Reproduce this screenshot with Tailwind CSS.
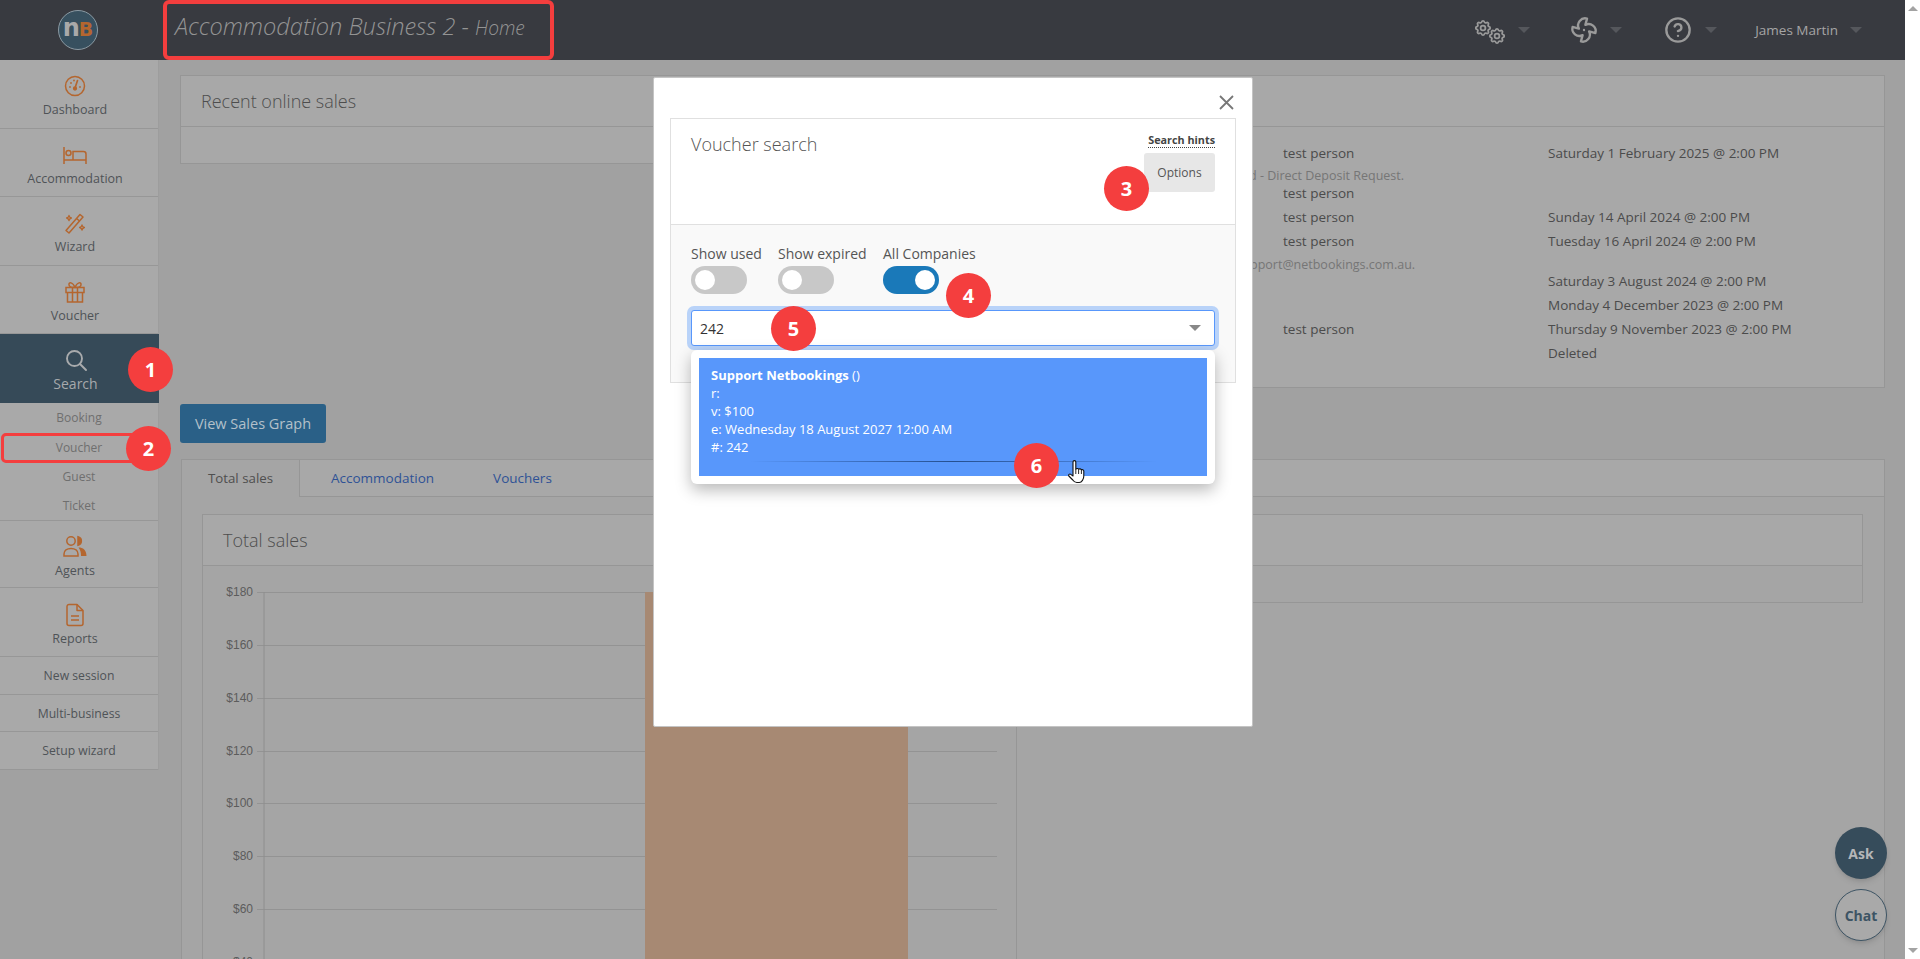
<!doctype html>
<html>
<head>
  <meta charset="UTF-8">
  <meta name="viewport" content="width=device-width, initial-scale=1.0">
  <script src="https://cdn.jsdelivr.net/npm/@tailwindcss/browser@4"></script>
</head>
<body class="relative w-[1920px] h-[959px] overflow-hidden flex bg-white font-['Open_Sans',sans-serif] text-[#505050]">

  <!-- page, already dimmed by the modal backdrop -->
  <div class="w-[1905px] h-[959px] flex flex-col bg-[#a1a1a1] shrink-0">
    <header class="h-[60px] bg-[#383a40] flex items-center shrink-0">
      <div class="w-[175px] shrink-0 pl-[58px]">
        <div class="w-[40px] h-[40px] rounded-full bg-[#37505f] border border-[#8b9aa3] flex items-baseline justify-center pt-[5px] font-['DejaVu_Sans',sans-serif] font-bold leading-none">
          <span class="text-[#a9a9a9] text-[24px] -mr-[1px]">n</span><span class="text-[#b4662f] text-[19px]">B</span>
        </div>
      </div>
      <div class="-mt-[7px] italic font-light text-[#949494] text-[23.6px] whitespace-nowrap">Accommodation Business 2 - <span class="text-[19.2px]">Home</span></div>
      <div class="ml-auto flex items-center text-[#9a9a9a]">
        <svg class="w-[30px] h-[30px]" viewBox="0 0 30 30" fill="none" stroke="currentColor">
          <g transform="translate(-1.6 3.4) scale(.8)"><path d="M10.325 4.317c.426 -1.756 2.924 -1.756 3.35 0a1.724 1.724 0 0 0 2.573 1.066c1.543 -.94 3.31 .826 2.37 2.37a1.724 1.724 0 0 0 1.065 2.572c1.756 .426 1.756 2.924 0 3.35a1.724 1.724 0 0 0 -1.066 2.573c.94 1.543 -.826 3.31 -2.37 2.37a1.724 1.724 0 0 0 -2.572 1.065c-.426 1.756 -2.924 1.756 -3.35 0a1.724 1.724 0 0 0 -2.573 -1.066c-1.543 .94 -3.31 -.826 -2.37 -2.37a1.724 1.724 0 0 0 -1.065 -2.572c-1.756 -.426 -1.756 -2.924 0 -3.35a1.724 1.724 0 0 0 1.066 -2.573c-.94 -1.543 .826 -3.31 2.37 -2.37c1 .608 2.296 .07 2.572 -1.065z" stroke-width="2.200"/><circle cx="12" cy="12" r="3" stroke-width="2.200"/></g>
          <g transform="translate(12.4 11.4) scale(.8)"><path d="M10.325 4.317c.426 -1.756 2.924 -1.756 3.35 0a1.724 1.724 0 0 0 2.573 1.066c1.543 -.94 3.31 .826 2.37 2.37a1.724 1.724 0 0 0 1.065 2.572c1.756 .426 1.756 2.924 0 3.35a1.724 1.724 0 0 0 -1.066 2.573c.94 1.543 -.826 3.31 -2.37 2.37a1.724 1.724 0 0 0 -2.572 1.065c-.426 1.756 -2.924 1.756 -3.35 0a1.724 1.724 0 0 0 -2.573 -1.066c-1.543 .94 -3.31 -.826 -2.37 -2.37a1.724 1.724 0 0 0 -1.065 -2.572c-1.756 -.426 -1.756 -2.924 0 -3.35a1.724 1.724 0 0 0 1.066 -2.573c-.94 -1.543 .826 -3.31 2.37 -2.37c1 .608 2.296 .07 2.572 -1.065z" stroke-width="2.200"/><circle cx="12" cy="12" r="3" stroke-width="2.200"/></g>
        </svg>
        <div class="ml-[13px] w-0 h-0 border-x-[6px] border-x-transparent border-t-[6px] border-t-[#55575c]"></div>
        <svg class="ml-[40px] w-[28px] h-[28px]" viewBox="0 0 24 24" fill="none" stroke="currentColor" stroke-width="2" stroke-linejoin="round" stroke-linecap="round"><path d="M10.827 16.379a6.082 6.082 0 0 1-8.618-7.002l5.412 1.45a6.082 6.082 0 0 1 7.002-8.618l-1.45 5.412a6.082 6.082 0 0 1 8.618 7.002l-5.412-1.45a6.082 6.082 0 0 1-7.002 8.618l1.45-5.412Z"/><path d="M12 12v.01"/></svg>
        <div class="ml-[12px] w-0 h-0 border-x-[6px] border-x-transparent border-t-[6px] border-t-[#55575c]"></div>
        <svg class="ml-[42px] w-[28px] h-[28px]" viewBox="0 0 24 24" fill="none" stroke="currentColor" stroke-width="2" stroke-linecap="round" stroke-linejoin="round"><circle cx="12" cy="12" r="10"/><path d="M9.09 9a3 3 0 0 1 5.83 1c0 2-3 3-3 3"/><path d="M12 17h.01"/></svg>
        <div class="ml-[13px] w-0 h-0 border-x-[6px] border-x-transparent border-t-[6px] border-t-[#55575c]"></div>
        <span class="ml-[38px] text-[13.5px] text-[#a5a5a5] whitespace-nowrap">James Martin</span>
        <div class="ml-[12px] mr-[43px] w-0 h-0 border-x-[6px] border-x-transparent border-t-[6px] border-t-[#55575c]"></div>
      </div>
    </header>

    <div class="flex flex-1 min-h-0">
      <!-- sidebar -->
      <nav class="w-[159px] shrink-0 self-start bg-[#a9a9a9] border-r border-[#9d9d9d] text-[12.5px] text-[#4f5357]">
        <a class="h-[69px] flex flex-col items-center pt-[14px] pr-[8px] border-b border-[#979797]">
          <svg class="w-[24px] h-[24px] text-[#b4662f]" viewBox="0 0 24 24" fill="none" stroke="currentColor" stroke-width="1.5" stroke-linecap="round"><circle cx="12" cy="12" r="9.5"/><path d="M12.5 12.5l2-6" stroke-width="1.7"/><circle cx="12" cy="14.5" r="1.4" fill="currentColor"/><path d="M7 13v.01M8 9v.01M11 6.5v.01M17 13v.01" stroke-width="1.8"/></svg>
          <span class="mt-[2px] leading-[20px]">Dashboard</span>
        </a>
        <a class="h-[68px] flex flex-col items-center pt-[14px] pr-[8px] border-b border-[#979797]">
          <svg class="w-[24px] h-[24px] text-[#b4662f]" viewBox="0 0 24 24" fill="none" stroke="currentColor" stroke-width="1.5"><path d="M1 4v17M1 17h22M23 21V11a2.5 2.5 0 0 0-2.5-2.5H10V17"/><circle cx="5.5" cy="10" r="2.5"/></svg>
          <span class="mt-[2px] leading-[20px]">Accommodation</span>
        </a>
        <a class="h-[69px] flex flex-col items-center pt-[14px] pr-[8px] border-b border-[#979797]">
          <svg class="w-[24px] h-[24px] text-[#b4662f]" viewBox="0 0 24 24" fill="none" stroke="currentColor" stroke-width="1.5" stroke-linejoin="round"><path d="M3 19.5L17 3.5l3 2.5L6 22z"/><path d="M13.5 7.5l3 2.5"/><path d="M6 4.5c.3 1.6 1 2.2 2.4 2.5-1.4.3-2.1 1-2.4 2.5-.3-1.5-1-2.2-2.4-2.5 1.4-.3 2.1-.9 2.4-2.5zM19 14c.3 1.6 1 2.2 2.4 2.5-1.4.3-2.1 1-2.4 2.5-.3-1.5-1-2.2-2.4-2.5 1.4-.3 2.1-.9 2.4-2.5z" stroke-width="1.3"/></svg>
          <span class="mt-[2px] leading-[20px]">Wizard</span>
        </a>
        <a class="h-[68px] flex flex-col items-center pt-[14px] pr-[8px] border-b border-[#979797]">
          <svg class="w-[24px] h-[24px] text-[#b4662f]" viewBox="0 0 24 24" fill="none" stroke="currentColor" stroke-width="1.5"><rect x="3" y="7.5" width="18" height="5"/><path d="M4.5 12.5V22h15v-9.500M9.500 7.500V22M14.500 7.500V22"/><path d="M12 7.500C10 2 5.500 1.500 6 5c.2 1.500 2 2.500 6 2.500zM12 7.500C14 2 18.500 1.500 18 5c-.2 1.500-2 2.500-6 2.500z"/></svg>
          <span class="mt-[2px] leading-[20px]">Voucher</span>
        </a>
        <a class="h-[69px] flex flex-col items-center pt-[14px] pr-[8px] bg-[#364a58] text-[#a6a9ac] text-[14px] -mr-px">
          <svg class="w-[24px] h-[24px] text-[#a9abad]" viewBox="0 0 24 24" fill="none" stroke="currentColor" stroke-width="1.9" stroke-linecap="round"><circle cx="10.500" cy="10.500" r="7.500"/><path d="M16 16l6 6"/></svg>
          <span class="mt-[2px] leading-[20px]">Search</span>
        </a>
        <div class="h-[118px] flex flex-col text-[12px] text-[#6f6f6f] border-b border-[#979797]">
          <a class="flex-1 flex items-center justify-center">Booking</a>
          <a class="flex-1 flex items-center justify-center pt-[1px]">Voucher</a>
          <a class="flex-1 flex items-center justify-center">Guest</a>
          <a class="flex-1 flex items-center justify-center">Ticket</a>
        </div>
        <a class="h-[67px] flex flex-col items-center pt-[14px] pr-[8px] border-b border-[#979797]">
          <svg class="w-[24px] h-[24px] text-[#b4662f]" viewBox="0 0 24 24" fill="none" stroke="currentColor" stroke-width="1.5"><circle cx="8" cy="6" r="4.200"/><path d="M1 21v-2c0-3.500 3-5.500 7-5.500s7 2 7 5.500v2z"/><path d="M15 1.800a4.300 4.300 0 0 1 0 8.400z" fill="currentColor"/><path d="M15.500 12.500c4.500 0 8 2.500 8 8.500h-5.500c0-3.500-.5-6-2.500-8.500z" fill="currentColor" stroke="none"/></svg>
          <span class="mt-[2px] leading-[20px]">Agents</span>
        </a>
        <a class="h-[69px] flex flex-col items-center pt-[15px] pr-[8px] border-b border-[#979797]">
          <svg class="w-[24px] h-[24px] text-[#b4662f]" viewBox="0 0 24 24" fill="none" stroke="currentColor" stroke-width="1.5" stroke-linejoin="round"><path d="M14 1.500H6a2 2 0 0 0-2 2v17a2 2 0 0 0 2 2h12a2 2 0 0 0 2-2V7.500z"/><path d="M14 1.500v6h6M8 13h8M8 17h8"/></svg>
          <span class="mt-[2px] leading-[20px]">Reports</span>
        </a>
        <a class="h-[38px] pt-[2px] flex items-center justify-center border-b border-[#979797] text-[12.2px]">New session</a>
        <a class="h-[37px] pt-[3px] flex items-center justify-center border-b border-[#979797] text-[12.2px]">Multi-business</a>
        <a class="h-[38px] pt-[2px] flex items-center justify-center border-b border-[#979797] text-[12.2px]">Setup wizard</a>
      </nav>

      <!-- main column -->
      <main class="flex-1 min-w-0 pl-[21px] pr-[20px] pt-[15px] overflow-hidden">
        <section class="w-[1705px]">
          <div class="h-[52px] bg-[#a8a8a8] border border-[#969696] flex items-center pl-[20px] text-[18px] font-light text-[#4d4d4d]">Recent online sales</div>
          <div class="flex h-[261px]">
            <div class="w-[500px] h-[37px] bg-[#a8a8a8] border-x border-b border-[#969696]"></div>
            <div class="flex-1 bg-[#a8a8a8] border-r border-b border-[#969696] pt-[14px] pl-[603px] text-[13.5px] text-[#4b4b4b]">
              <div class="grid grid-cols-[265px_1fr] auto-rows-[24px] items-center">
                <span>test person</span><span>Saturday 1 February 2025 @ 2:00 PM</span>
              </div>
              <div class="h-[16px] -ml-[34px] pt-[3px] leading-[16px] text-[12.5px] text-[#767676]">d - Direct Deposit Request.</div>
              <div class="grid grid-cols-[265px_1fr] auto-rows-[24px] items-center">
                <span>test person</span><span></span>
                <span>test person</span><span>Sunday 14 April 2024 @ 2:00 PM</span>
                <span>test person</span><span>Tuesday 16 April 2024 @ 2:00 PM</span>
              </div>
              <div class="h-[16px] -ml-[33px] pt-[4px] leading-[16px] text-[12.5px] text-[#767676]">pport@netbookings.com.au.</div>
              <div class="grid grid-cols-[265px_1fr] auto-rows-[24px] items-center">
                <span></span><span>Saturday 3 August 2024 @ 2:00 PM</span>
                <span></span><span>Monday 4 December 2023 @ 2:00 PM</span>
                <span>test person</span><span>Thursday 9 November 2023 @ 2:00 PM</span>
                <span></span><span>Deleted</span>
              </div>
            </div>
          </div>
        </section>

        <button class="mt-[16px] h-[39px] w-[146px] rounded-[3px] bg-[#2a6087] text-[14.5px] text-[#b3c0ca] flex items-center justify-center">View Sales Graph</button>

        <section class="mt-[16px] ml-[1px] w-[1704px]">
          <div class="h-[38px] flex items-stretch bg-[#a8a8a8] border-t border-r border-[#969696] text-[13.5px]">
            <a class="w-[119px] border-l border-r border-[#969696] bg-[#a5a5a5] flex items-center justify-center text-[#4f4f4f] text-[13.3px]">Total sales</a>
            <div class="flex-1 flex items-center border-b border-[#969696] text-[#2f5296]">
              <a class="ml-[31px]">Accommodation</a>
              <a class="ml-[59px]">Vouchers</a>
            </div>
          </div>
          <div class="bg-[#a5a5a5] border-x border-[#969696] px-[20px] pt-[17px] h-[500px]">
            <div class="h-[52px] w-[1661px] bg-[#a8a8a8] border border-[#969696] flex items-center pl-[20px] text-[18px] font-light text-[#4d4d4d]">Total sales</div>
            <div class="flex w-[1661px]">
              <div class="w-[815px] h-[440px] border-x border-[#969696]">
                <svg width="814" height="394" class="block -mt-px">
                  <g stroke="#939393" stroke-width="1">
                    <path d="M54 27.500H794M54 80.500H794M54 133.500H794M54 186.500H794M54 238.500H794M54 291.500H794M54 344.500H794M54 397.500H794"/>
                    <path d="M61 27V394" stroke="#8e8e8e"/>
                  </g>
                  <rect x="442" y="27" width="263" height="367" fill="#a78973"/>
                  <g fill="#5c5c5c" font-family="Liberation Sans, sans-serif" font-size="12" text-anchor="end">
                    <text x="50" y="31">$180</text>
                    <text x="50" y="84">$160</text>
                    <text x="50" y="137">$140</text>
                    <text x="50" y="190">$120</text>
                    <text x="50" y="242">$100</text>
                    <text x="50" y="295">$80</text>
                    <text x="50" y="348">$60</text>
                    <text x="50" y="401">$40</text>
                  </g>
                </svg>
              </div>
              <div class="flex-1 h-[37px] border-r border-b border-[#969696]"></div>
            </div>
          </div>
        </section>
      </main>
    </div>
  </div>

  <!-- scrollbar -->
  <div class="w-[15px] h-[959px] bg-white flex flex-col items-center justify-between py-[6px]">
    <div class="w-0 h-0 border-x-[5px] border-x-transparent border-b-[5px] border-b-[#a3a3a3]"></div>
    <div class="w-0 h-0 border-x-[5px] border-x-transparent border-t-[5px] border-t-[#a3a3a3]"></div>
  </div>

  <!-- floating help buttons -->
  <div class="absolute left-[1835px] top-[827px] flex flex-col gap-[10px] font-bold text-[14px]">
    <div class="w-[52px] h-[52px] rounded-full bg-[#364c5b] text-[#b4b6b8] flex items-center justify-center shadow-md">Ask</div>
    <div class="w-[52px] h-[52px] rounded-full bg-[#a9a9a9] border border-[#3d5464] text-[#3d5464] flex items-center justify-center shadow-md">Chat</div>
  </div>

  <!-- voucher search modal -->
  <div class="absolute left-[653px] top-[77px] w-[600px] h-[650px] bg-white border border-[#c4c4c4] rounded-[2px] pt-[40px] pl-[16px] pr-[16px]">
    <svg class="absolute left-[565px] top-[17px] w-[15px] h-[15px]" viewBox="0 0 15 15" stroke="#777" stroke-width="1.8"><path d="M1 1l13 13M14 1L1 14"/></svg>
    <div class="h-[265px] border border-[#e0e0e0] bg-[#f9f9f9]">
      <div class="h-[106px] bg-white border-b border-[#e0e0e0] flex justify-between pl-[20px] pr-[20px]">
        <div class="pt-[12px] text-[18px] font-light text-[#555] leading-[27px]">Voucher search</div>
        <div class="pt-[14px] flex flex-col items-end">
          <span class="text-[10.8px] leading-[14px] font-bold text-[#444] border-b border-dotted border-[#444]">Search hints</span>
          <button class="mt-[5px] w-[71px] h-[39px] rounded-[3px] bg-[#e7e7e7] text-[12px] text-[#555]">Options</button>
        </div>
      </div>
      <div class="pt-[19px] pl-[20px] pr-[20px]">
        <div class="flex text-[14px] text-[#555] leading-[20px]">
          <div class="w-[87px]">
            <div class="whitespace-nowrap">Show used</div>
            <div class="mt-[2px] w-[56px] h-[28px] rounded-full bg-[#c8c8c8] flex items-center pl-[4px]"><div class="w-[20px] h-[20px] rounded-full bg-white"></div></div>
          </div>
          <div class="w-[105px]">
            <div class="whitespace-nowrap">Show expired</div>
            <div class="mt-[2px] w-[56px] h-[28px] rounded-full bg-[#c8c8c8] flex items-center pl-[4px]"><div class="w-[20px] h-[20px] rounded-full bg-white"></div></div>
          </div>
          <div>
            <div class="whitespace-nowrap">All Companies</div>
            <div class="mt-[2px] w-[56px] h-[28px] rounded-full bg-[#1a79b9] flex items-center justify-end pr-[4px]"><div class="w-[20px] h-[20px] rounded-full bg-white"></div></div>
          </div>
        </div>
        <div class="relative mt-[16px] h-[36px] w-[524px] bg-white border border-[#5897fb] rounded-[3px] ring-[4px] ring-[#b9d3f9] flex items-center pl-[8px] text-[14px] text-[#333]">
          242
          <div class="absolute right-[13px] top-[14px] w-0 h-0 border-x-[6px] border-x-transparent border-t-[6px] border-t-[#888]"></div>
        </div>
      </div>
    </div>
    <!-- dropdown results -->
    <div class="absolute left-[37px] top-[272px] w-[524px] h-[134px] bg-white rounded-[6px] shadow-[0_6px_16px_rgba(0,0,0,0.28)] p-[8px]">
      <div class="relative h-[118px] bg-[#5897fb] text-white text-[13px] leading-[18px] pl-[12px] pt-[8px]">
        <div><b class="font-bold">Support Netbookings</b> ()</div>
        <div>r:</div>
        <div>v: $100</div>
        <div>e: Wednesday 18 August 2027 12:00 AM</div>
        <div>#: 242</div>
        <div class="absolute left-[51px] top-[103px] w-[407px] h-px bg-gradient-to-r from-[#5897fb] via-[#254f8f] to-[#5897fb]"></div>
      </div>
    </div>
  </div>

  <!-- hand cursor -->
  <svg class="absolute left-[1067px] top-[459px] w-[21px] h-[26px]" viewBox="0 0 21 26" fill="#fff" stroke="#111" stroke-width="1.1" stroke-linejoin="round">
    <path d="M6 3a1.400 1.400 0 0 1 2.800 0v7c.8-.8 2.400-.7 2.800.3.8-.7 2.400-.5 2.800.5.900-.5 2.300-.1 2.400 1.200v5c0 3-2 6.500-4.500 6.500h-2.500c-2 0-3-1-4-2.500L1.800 17c-.8-1.200.8-2.600 2-1.600L6 17z"/>
    <path d="M8.800 10v5M11.600 10.500V15M14.400 11v4" fill="none" stroke-width=".9"/>
  </svg>

  <!-- tutorial annotations -->
  <div class="absolute left-[163px] top-0 w-[391px] h-[60px] border-[4px] border-[#f43e3e] rounded-[6px]"></div>
  <div class="absolute left-[1px] top-[433px] w-[135px] h-[30px] border-[3px] border-[#f43e3e] rounded-[5px]"></div>
  <div class="absolute left-[128px] top-[347px] w-[45px] h-[45px] rounded-full bg-[#f43e3e] text-white font-bold text-[20px] flex items-center justify-center">1</div>
  <div class="absolute left-[126px] top-[426px] w-[45px] h-[45px] rounded-full bg-[#f43e3e] text-white font-bold text-[20px] flex items-center justify-center">2</div>
  <div class="absolute left-[1104px] top-[166px] w-[45px] h-[45px] rounded-full bg-[#f43e3e] text-white font-bold text-[20px] flex items-center justify-center">3</div>
  <div class="absolute left-[946px] top-[273px] w-[45px] h-[45px] rounded-full bg-[#f43e3e] text-white font-bold text-[20px] flex items-center justify-center">4</div>
  <div class="absolute left-[771px] top-[306px] w-[45px] h-[45px] rounded-full bg-[#f43e3e] text-white font-bold text-[20px] flex items-center justify-center">5</div>
  <div class="absolute left-[1014px] top-[443px] w-[45px] h-[45px] rounded-full bg-[#f43e3e] text-white font-bold text-[20px] flex items-center justify-center">6</div>
</body>
</html>
